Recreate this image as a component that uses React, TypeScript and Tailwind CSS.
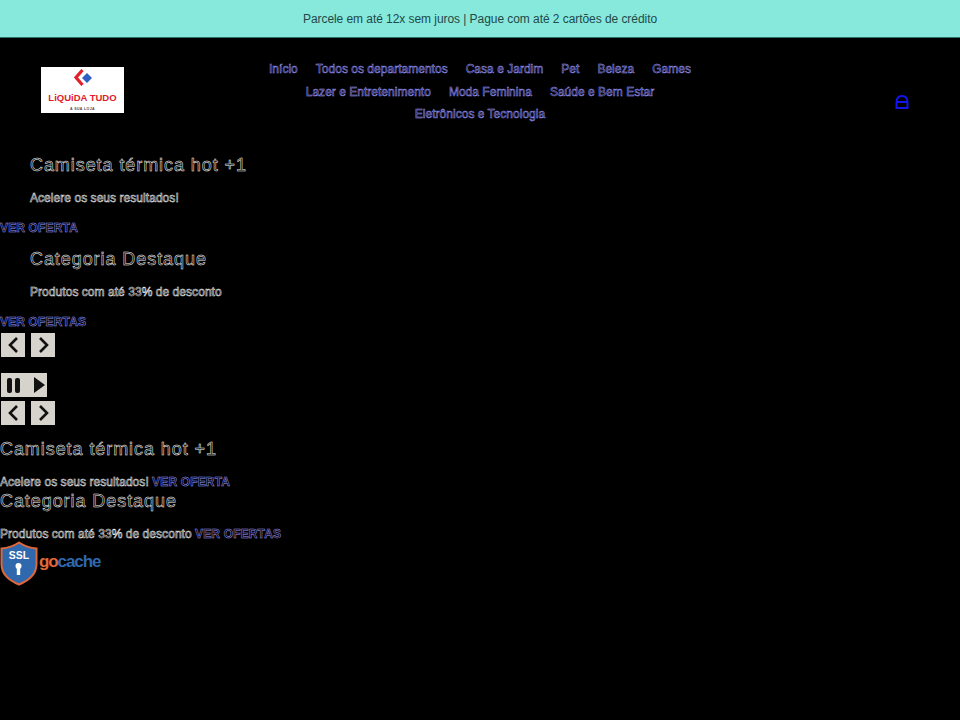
const navRows = [
  ["Início", "Todos os departamentos", "Casa e Jardim", "Pet", "Beleza", "Games"],
  ["Lazer e Entretenimento", "Moda Feminina", "Saúde e Bem Estar"],
  ["Eletrônicos e Tecnologia"],
];

const font = "font-['Liberation_Sans',Arial,sans-serif]";
const ghost = "text-black [-webkit-text-stroke:0.5px_#f4f4f4]";
const ghostLink = "text-black [-webkit-text-stroke:0.5px_#9c9aff]";

function Chevron({ dir }: { dir: "left" | "right" }) {
  return (
    <span className="flex h-6 w-6 items-center justify-center bg-[#d6d3cd]">
      <svg width="24" height="24" viewBox="0 0 24 24" fill="none" stroke="#111" strokeWidth="2.6">
        <path d={dir === "left" ? "M16 5l-7 7 7 7" : "M9 5l7 7-7 7"} />
      </svg>
    </span>
  );
}

function Arrows() {
  return (
    <div className="flex gap-1.5 pl-px">
      <Chevron dir="left" />
      <Chevron dir="right" />
    </div>
  );
}

function HeroSlide({ title, text, cta }: { title: string; text: string; cta: string }) {
  return (
    <div>
      <h2 className={`h-[32px] pl-[30px] pt-[5px] text-[18px] leading-[24px] tracking-[0.93px] ${ghost}`}>{title}</h2>
      <p className={`mt-[11px] h-[15px] pl-[30px] text-[12px] leading-[15px] tracking-[0.05px] ${ghost}`}>{text}</p>
      <a className={`mt-[15px] block h-[15px] text-[12px] font-bold leading-[15px] tracking-[0.15px] ${ghostLink}`}>{cta}</a>
    </div>
  );
}

function InlineSlide({ title, text, cta }: { title: string; text: string; cta: string }) {
  return (
    <div>
      <h2 className={`h-[30px] pt-[2px] text-[18px] leading-[24px] tracking-[0.93px] ${ghost}`}>{title}</h2>
      <p className="mt-[12px] h-[10px] whitespace-nowrap text-[12px] leading-[10px]">
        <span className={`tracking-[0.05px] ${ghost}`}>{text}</span>{" "}
        <a className={`font-bold tracking-[0.15px] ${ghostLink}`}>{cta}</a>
      </p>
    </div>
  );
}

function Logo() {
  return (
    <div className={`flex h-[46px] w-[83px] flex-col items-center bg-white ${font}`}>
      <svg width="20" height="20" viewBox="0 0 20 20" className="mt-[1px]">
        <path d="M9.500 2L3 9.500 9.500 17" fill="none" stroke="#e2202c" strokeWidth="3.200" />
        <path d="M14 5l5 5-5 5-5-5z" fill="#2f5fc0" />
      </svg>
      <span className="mt-[5px] text-[9.500px] font-bold leading-[10px] whitespace-nowrap text-[#e2202c]">LiQUiDA TUDO</span>
      <span className="mt-[4px] text-[3.500px] font-bold leading-[5px] tracking-[0.4px] text-[#445]">A SUA LOJA</span>
    </div>
  );
}

function SslBadge() {
  return (
    <div className={`flex h-[47px] items-center ${font}`}>
      <svg width="38" height="45" viewBox="0 0 38 45">
        <path d="M19 1.500C25 5.500 30 7 36.500 7.500V23c0 10-7.500 16.500-17.500 20.500C9 39.500 1.500 33 1.500 23V7.500C8 7 13 5.500 19 1.500z" fill="#2f68ac" stroke="#e0673a" strokeWidth="2" />
        <text x="19" y="18" textAnchor="middle" fontSize="10.500" fontWeight="700" fill="#fff">SSL</text>
        <circle cx="18.500" cy="25" r="3" fill="#fff" />
        <rect x="16.800" y="26" width="3.400" height="8" fill="#fff" />
      </svg>
      <span className="-mt-[4px] ml-[1px] text-[17px] font-bold leading-none tracking-[-1.1px]">
        <span className="text-[#e0673a]">go</span>
        <span className="text-[#2f68ac]">cache</span>
      </span>
    </div>
  );
}

export default function App() {
  return (
    <div className={`min-h-[720px] bg-black ${font}`}>
      <div className="flex h-[38px] items-center justify-center border-b border-[#2d6f69] bg-[#87e8dc] text-[12px] tracking-[-0.06px] text-[#1f4a48]">
        Parcele em até 12x sem juros | Pague com até 2 cartões de crédito
      </div>

      <header className="relative flex h-[110px] items-start px-[41px] pt-[29px]">
        <Logo />
        <nav className="absolute left-0 right-0 top-[24px] flex flex-col items-center gap-[7px]">
          {navRows.map((row, i) => (
            <div key={i} className="flex h-[15.500px] items-center gap-[18px]">
              {row.map((item) => (
                <a key={item} className={`text-[12px] leading-[15px] tracking-[0.02px] whitespace-nowrap ${ghostLink}`}>
                  {item}
                </a>
              ))}
            </div>
          ))}
        </nav>
        <svg className="absolute right-[50px] top-[56px]" width="16" height="16" viewBox="0 0 16 16" fill="none" stroke="#1414ee" strokeWidth="2">
          <path d="M2.500 14V8.500C2.500 4 5 2 8 2s5.500 2 5.500 6.500V14z" />
          <path d="M2.500 8h11" />
        </svg>
      </header>

      <HeroSlide title="Camiseta térmica hot +1" text="Acelere os seus resultados!" cta="VER OFERTA" />
      <div className="mt-[6px]">
        <HeroSlide title="Categoria Destaque" text="Produtos com até 33% de desconto" cta="VER OFERTAS" />
      </div>

      <div className="mt-[3px]">
        <Arrows />
      </div>
      <div className="mt-[16px] pl-px">
        <span className="flex h-6 w-[46px] items-center gap-[3px] bg-[#d6d3cd] pl-[6px]">
          <span className="h-[15px] w-[5px] rounded-[2px] bg-[#111]" />
          <span className="h-[15px] w-[5px] rounded-[2px] bg-[#111]" />
          <svg width="14" height="16" viewBox="0 0 14 16" className="ml-[10px]">
            <path d="M1 0l11 8-11 8z" fill="#111" />
          </svg>
        </span>
      </div>
      <div className="mt-[4px]">
        <Arrows />
      </div>

      <div className="mt-[10px]">
        <InlineSlide title="Camiseta térmica hot +1" text="Acelere os seus resultados!" cta="VER OFERTA" />
        <InlineSlide title="Categoria Destaque" text="Produtos com até 33% de desconto" cta="VER OFERTAS" />
      </div>
      <div className="mt-[1px]">
        <SslBadge />
      </div>
    </div>
  );
}
